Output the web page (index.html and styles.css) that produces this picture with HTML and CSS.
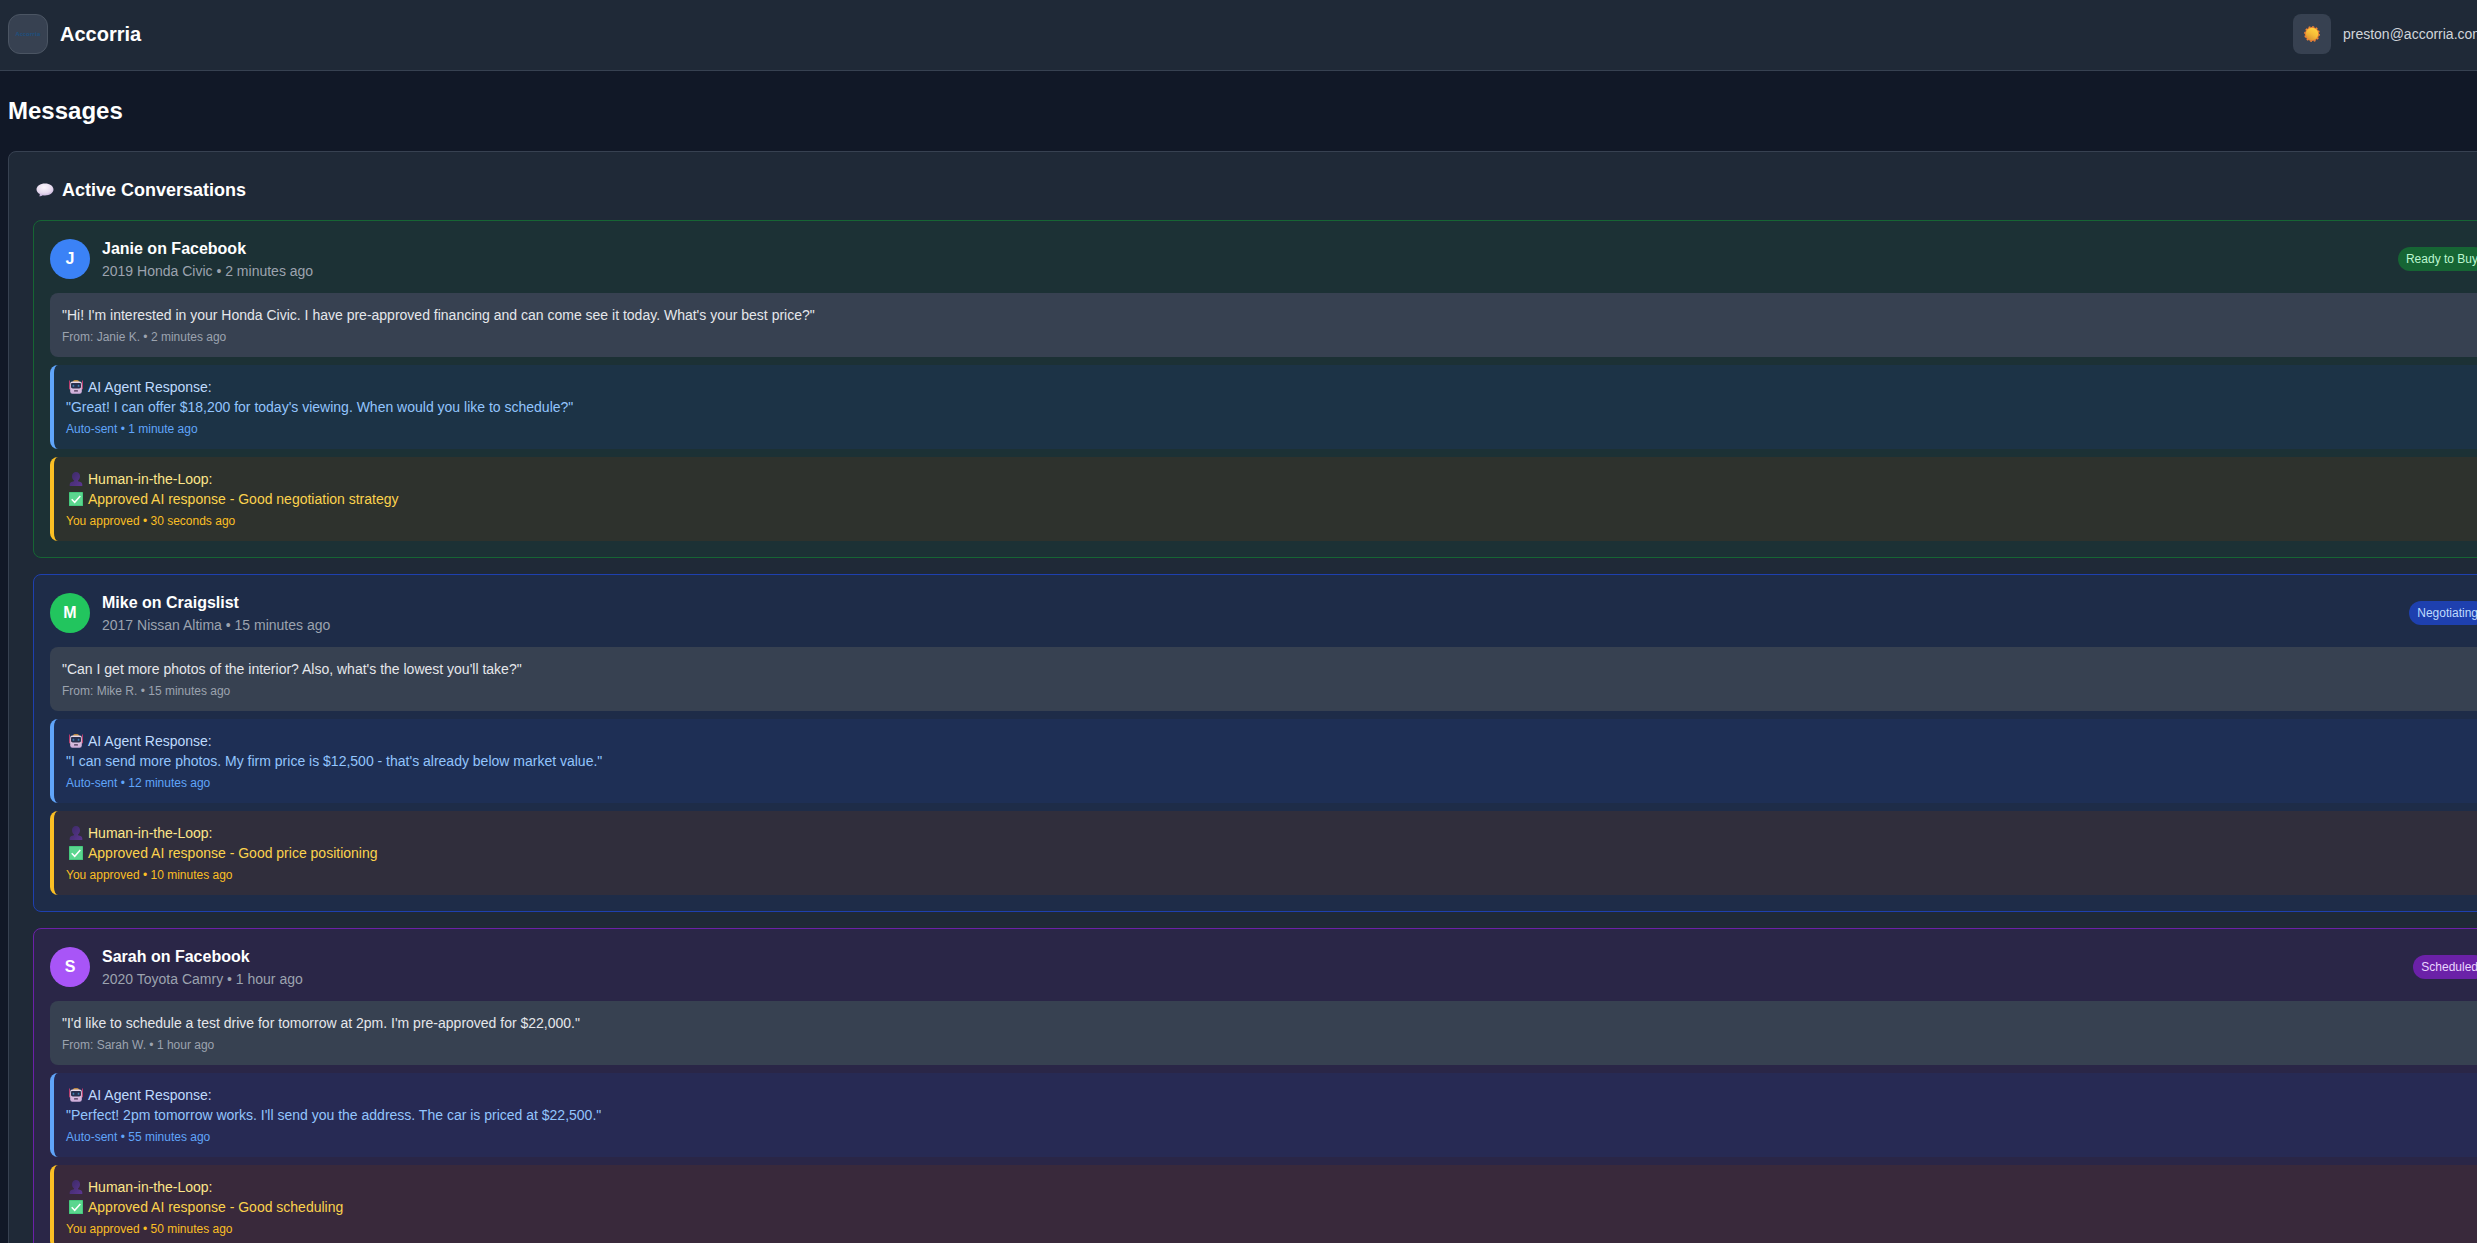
FILE: index.html
```html
<!DOCTYPE html>
<html lang="en">
<head>
<meta charset="utf-8">
<title>Accorria - Messages</title>
<link rel="stylesheet" href="styles.css">
</head>
<body>
<svg class="sprite" aria-hidden="true">
  <defs>
    <radialGradient id="bubble-fill" cx="45%" cy="30%" r="75%">
      <stop offset="0" stop-color="#fbf6fc"/><stop offset="0.6" stop-color="#e6daee"/><stop offset="1" stop-color="#bba4d2"/>
    </radialGradient>
    <linearGradient id="sun-fill" x1="0.8" y1="0.1" x2="0.3" y2="0.95">
      <stop offset="0" stop-color="#ffd23e"/><stop offset="0.5" stop-color="#f6bc38"/><stop offset="1" stop-color="#dc9632"/>
    </linearGradient>
    <linearGradient id="face-fill" x1="0" y1="0" x2="0" y2="1">
      <stop offset="0" stop-color="#e9dcea"/><stop offset="1" stop-color="#cdaad8"/>
    </linearGradient>
    <linearGradient id="person-fill" x1="0" y1="0" x2="1" y2="1">
      <stop offset="0" stop-color="#3b2a66"/><stop offset="1" stop-color="#5c3690"/>
    </linearGradient>
  </defs>
  <symbol id="bubble" viewBox="0 0 18 14">
    <path d="M9 .5c4.800 0 8.500 2.600 8.500 6s-3.700 5.900-8.500 5.900c-.8 0-1.600 0-2.300-.2-.9.700-2.100 1.200-3.500 1.100.5-.6.700-1.300.6-2.200C1.800 10 .5 8.400.5 6.500c0-3.400 3.700-6 8.500-6z" fill="url(#bubble-fill)"/>
  </symbol>
  <symbol id="sun" viewBox="0 0 16 16">
    <circle cx="8" cy="8" r="7.100" fill="#e87a33"/>
    <circle cx="8" cy="8" r="7.200" fill="none" stroke="#f08536" stroke-width="1.400" stroke-dasharray="1.900 1.870"/>
    <circle cx="8" cy="8" r="6.200" fill="url(#sun-fill)"/>
  </symbol>
  <symbol id="robot" viewBox="0 0 14 14">
    <path d="M.5.500v8M13.500.500v8" stroke="#b8386c" stroke-width="1"/>
    <rect x="0" y="5" width="14" height="4.500" rx="1" fill="#b5446f"/>
    <path d="M4 1.800C4 .600 5.200.200 7 .200s3 .4 3 1.600z" fill="#efa63a"/>
    <rect x="1.200" y="1.500" width="11.600" height="12.300" rx="2.200" fill="url(#face-fill)"/>
    <path d="M2 4.200c0-.7.500-1.200 1.200-1.200h7.600c.7 0 1.200.5 1.200 1.200v2.600c0 1-.7 1.600-1.800 1.600H3.800C2.700 8.400 2 7.800 2 6.800z" fill="#28304f"/>
    <rect x="3.600" y="4.800" width="1.700" height="2" rx=".6" fill="#3c7fae"/>
    <rect x="8.700" y="4.800" width="1.700" height="2" rx=".6" fill="#3c7fae"/>
    <rect x="5" y="10.200" width="4" height="1.400" rx=".6" fill="#44304f"/>
  </symbol>
  <symbol id="person" viewBox="0 0 14 14">
    <path d="M7 0c2.400 0 4 1.700 4 4.200 0 1.900-.8 3.500-2 4.300v.8c2.600.3 4.300 1.400 4.300 3.300V14H.7v-1.400c0-1.900 1.700-3 4.300-3.300v-.8c-1.200-.8-2-2.400-2-4.300C3 1.700 4.600 0 7 0z" fill="url(#person-fill)"/>
  </symbol>
  <symbol id="check" viewBox="0 0 14 14">
    <rect width="14" height="14" rx=".6" fill="#42c678"/>
    <rect x=".8" y=".8" width="12.400" height="12.400" fill="#5bd68f"/>
    <path d="M2.700 7.300l3 3L11.300 4" fill="none" stroke="#fff" stroke-width="1.500"/>
  </symbol>
</svg>

<div class="page">
  <header class="topbar">
    <div class="brand">
      <span class="logo" aria-hidden="true">Accorria</span>
      <span class="brand-name">Accorria</span>
    </div>
    <div class="account">
      <button class="theme-toggle" type="button" aria-label="Toggle theme"><svg class="icon-sun"><use href="#sun"/></svg></button>
      <span class="email">preston@accorria.com</span>
    </div>
  </header>

  <main class="content">
    <h1>Messages</h1>
    <section class="panel">
      <h2><span class="heading-icon"><svg class="icon-bubble"><use href="#bubble"/></svg></span>Active Conversations</h2>

      <div class="conversations">
        <article class="card card-green">
          <div class="card-head">
            <div class="avatar avatar-blue">J</div>
            <div class="who">
              <h3>Janie on Facebook</h3>
              <p class="vehicle">2019 Honda Civic • 2 minutes ago</p>
            </div>
            <span class="badge badge-green">Ready to Buy</span>
          </div>
          <div class="note note-buyer">
            <p>"Hi! I'm interested in your Honda Civic. I have pre-approved financing and can come see it today. What's your best price?"</p>
            <p class="meta">From: Janie K. • 2 minutes ago</p>
          </div>
          <div class="note note-agent">
            <p class="note-title"><span class="emoji"><svg><use href="#robot"/></svg></span>AI Agent Response:</p>
            <p>"Great! I can offer $18,200 for today's viewing. When would you like to schedule?"</p>
            <p class="meta">Auto-sent • 1 minute ago</p>
          </div>
          <div class="note note-human">
            <p class="note-title"><span class="emoji"><svg><use href="#person"/></svg></span>Human-in-the-Loop:</p>
            <p class="with-icon"><span class="emoji"><svg><use href="#check"/></svg></span>Approved AI response - Good negotiation strategy</p>
            <p class="meta">You approved • 30 seconds ago</p>
          </div>
        </article>

        <article class="card card-blue">
          <div class="card-head">
            <div class="avatar avatar-green">M</div>
            <div class="who">
              <h3>Mike on Craigslist</h3>
              <p class="vehicle">2017 Nissan Altima • 15 minutes ago</p>
            </div>
            <span class="badge badge-blue">Negotiating</span>
          </div>
          <div class="note note-buyer">
            <p>"Can I get more photos of the interior? Also, what's the lowest you'll take?"</p>
            <p class="meta">From: Mike R. • 15 minutes ago</p>
          </div>
          <div class="note note-agent">
            <p class="note-title"><span class="emoji"><svg><use href="#robot"/></svg></span>AI Agent Response:</p>
            <p>"I can send more photos. My firm price is $12,500 - that's already below market value."</p>
            <p class="meta">Auto-sent • 12 minutes ago</p>
          </div>
          <div class="note note-human">
            <p class="note-title"><span class="emoji"><svg><use href="#person"/></svg></span>Human-in-the-Loop:</p>
            <p class="with-icon"><span class="emoji"><svg><use href="#check"/></svg></span>Approved AI response - Good price positioning</p>
            <p class="meta">You approved • 10 minutes ago</p>
          </div>
        </article>

        <article class="card card-purple">
          <div class="card-head">
            <div class="avatar avatar-purple">S</div>
            <div class="who">
              <h3>Sarah on Facebook</h3>
              <p class="vehicle">2020 Toyota Camry • 1 hour ago</p>
            </div>
            <span class="badge badge-purple">Scheduled</span>
          </div>
          <div class="note note-buyer">
            <p>"I'd like to schedule a test drive for tomorrow at 2pm. I'm pre-approved for $22,000."</p>
            <p class="meta">From: Sarah W. • 1 hour ago</p>
          </div>
          <div class="note note-agent">
            <p class="note-title"><span class="emoji"><svg><use href="#robot"/></svg></span>AI Agent Response:</p>
            <p>"Perfect! 2pm tomorrow works. I'll send you the address. The car is priced at $22,500."</p>
            <p class="meta">Auto-sent • 55 minutes ago</p>
          </div>
          <div class="note note-human">
            <p class="note-title"><span class="emoji"><svg><use href="#person"/></svg></span>Human-in-the-Loop:</p>
            <p class="with-icon"><span class="emoji"><svg><use href="#check"/></svg></span>Approved AI response - Good scheduling</p>
            <p class="meta">You approved • 50 minutes ago</p>
          </div>
        </article>
      </div>
    </section>
  </main>
</div>
</body>
</html>
```
FILE: styles.css
```css
* { box-sizing: border-box; }

html { scrollbar-width: none; }

body {
  margin: 0;
  overflow-x: hidden;
  background: #111827;
  color: #fff;
  font-family: "Liberation Sans", Arial, sans-serif;
  font-size: 14px;
  line-height: 20px;
}

h1, h2, h3, p { margin: 0; }

svg { display: block; }

.sprite { position: absolute; width: 0; height: 0; }

/* The page runs a little wider than the window */
.page { margin-right: -59px; }

.topbar {
  display: flex;
  justify-content: space-between;
  align-items: center;
  padding: 14px 52px 16px 8px;
  background: #1f2937;
  border-bottom: 1px solid #374151;
}

.brand, .account {
  display: flex;
  align-items: center;
  gap: 12px;
}

.logo {
  display: flex;
  align-items: center;
  justify-content: center;
  width: 40px;
  height: 40px;
  border: 1px solid #4b5563;
  border-radius: 12px;
  background: #374151;
  color: #1f4f7c;
  font: bold 6px/8px "Noto Sans", sans-serif;
}

.brand-name {
  font-size: 20px;
  font-weight: 700;
  line-height: 28px;
}

.theme-toggle {
  padding: 12px 11px;
  border: 0;
  border-radius: 8px;
  background: #374151;
}

.icon-sun { width: 16px; height: 16px; }

.email { color: #d1d5db; }

.content { padding: 24px 8px; }

h1 {
  margin-bottom: 24px;
  font-size: 24px;
  line-height: 32px;
}

.panel {
  padding: 24px;
  border: 1px solid #374151;
  border-radius: 8px;
  background: #1f2937;
}

h2 {
  display: flex;
  align-items: center;
  gap: 5px;
  margin-bottom: 16px;
  font-size: 18px;
  line-height: 28px;
}

.heading-icon {
  display: flex;
  justify-content: center;
  width: 24px;
}

.icon-bubble { width: 18px; height: 14px; }

.conversations {
  display: flex;
  flex-direction: column;
  gap: 16px;
}

.card {
  display: flex;
  flex-direction: column;
  gap: 8px;
  padding: 16px;
  border: 1px solid;
  border-radius: 8px;
}

.card-green { background: rgba(20, 83, 45, 0.2); border-color: #166534; }
.card-blue { background: rgba(30, 58, 138, 0.2); border-color: #1e40af; }
.card-purple { background: rgba(88, 28, 135, 0.2); border-color: #6b21a8; }

.card-head {
  display: flex;
  align-items: center;
  gap: 12px;
  margin-bottom: 4px;
}

.avatar {
  display: flex;
  align-items: center;
  justify-content: center;
  width: 40px;
  height: 40px;
  border-radius: 50%;
  font-size: 16px;
  font-weight: 700;
}

.avatar-blue { background: #3b82f6; }
.avatar-green { background: #22c55e; }
.avatar-purple { background: #a855f7; }

.who { flex: 1; }

h3 {
  font-size: 16px;
  line-height: 24px;
}

.vehicle { color: #9ca3af; }

.badge {
  padding: 4px 8px;
  border-radius: 12px;
  font-size: 12px;
  line-height: 16px;
}

.badge-green { background: #166534; color: #bbf7d0; }
.badge-blue { background: #1e40af; color: #bfdbfe; }
.badge-purple { background: #6b21a8; color: #e9d5ff; }

.note {
  padding: 12px;
  border-radius: 8px;
}

.meta {
  margin-top: 4px;
  font-size: 12px;
  line-height: 16px;
}

.note-title, .with-icon {
  display: flex;
  align-items: center;
  gap: 5px;
}

.emoji {
  display: flex;
  justify-content: flex-end;
  width: 17px;
}

.emoji svg { width: 14px; height: 14px; }

.note-buyer { background: #374151; color: #e5e7eb; }
.note-buyer .meta { color: #9ca3af; }

.note-agent {
  border-left: 4px solid #60a5fa;
  background: rgba(30, 58, 138, 0.2);
  color: #93c5fd;
}
.note-agent .note-title { color: #bfdbfe; }
.note-agent .meta { color: #60a5fa; }

.note-human {
  border-left: 4px solid #fbbf24;
  background: rgba(120, 53, 15, 0.2);
  color: #fcd34d;
}
.note-human .note-title { color: #fde68a; }
.note-human .meta { color: #fbbf24; }
```
